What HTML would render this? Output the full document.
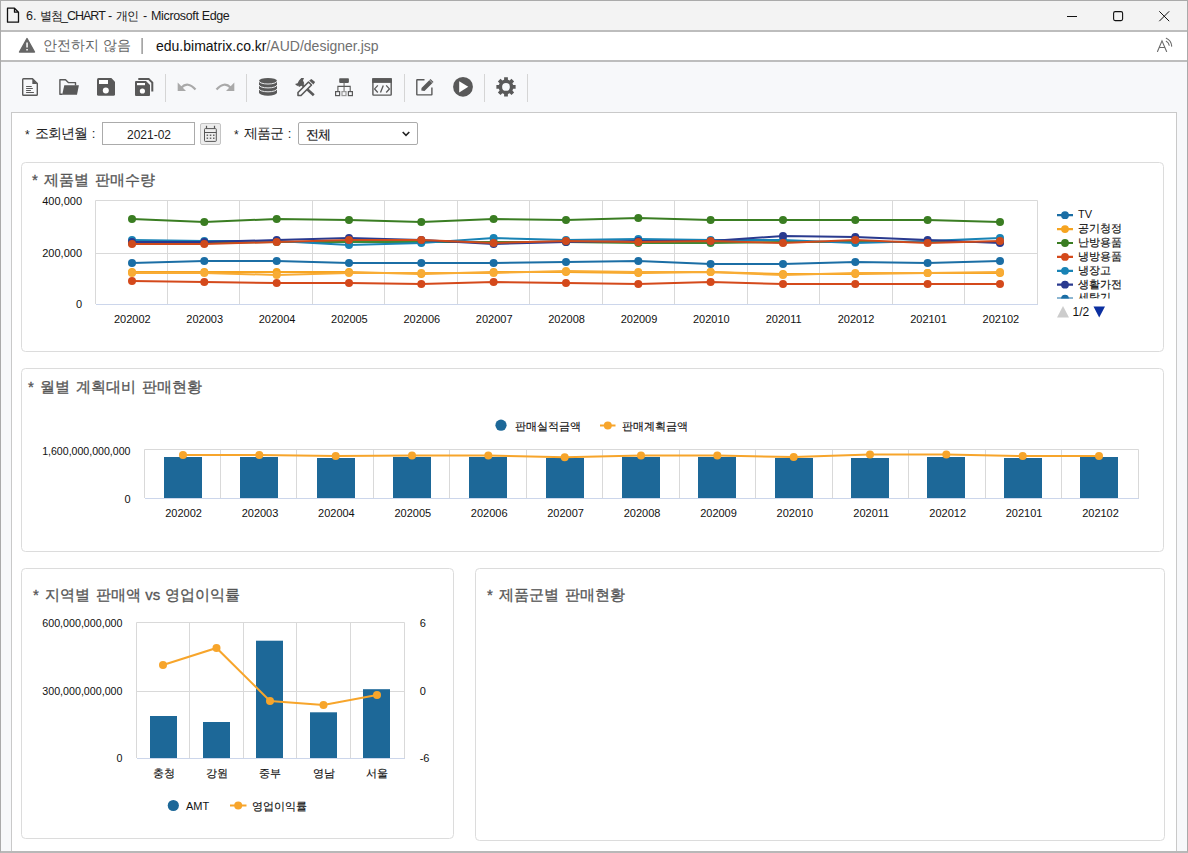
<!DOCTYPE html>
<html><head><meta charset="utf-8">
<style>
*{margin:0;padding:0;box-sizing:border-box}
html,body{width:1188px;height:853px;overflow:hidden;background:#f7f8fa;font-family:"Liberation Sans",sans-serif;color:#222;position:relative}
.a{position:absolute}
.t{position:absolute;white-space:nowrap;line-height:1}
svg{position:absolute;left:0;top:0;overflow:visible}
#title{position:absolute;left:0;top:0;width:1188px;height:30px;background:#f3f3f3}
#addr{position:absolute;left:0;top:32px;width:1188px;height:28px;background:#fff}
.hl{position:absolute;left:0;width:1188px;height:2px;background:#bdbdbd}
.sep{position:absolute;top:74px;width:1px;height:28px;background:#d4d4d4}
#content{position:absolute;left:11px;top:112px;width:1166px;height:745px;border:1px solid #c9c9c9;background:#fff}
.panel{position:absolute;border:1px solid #dcdcdc;border-radius:4.5px;background:#fff}
.ptitle{position:absolute;font-weight:400;-webkit-text-stroke:0.3px #555;font-size:15px;color:#555;white-space:nowrap;line-height:1;word-spacing:2px}
#frame{position:absolute;left:0;top:0;width:1188px;height:853px;border:1px solid #aaaaaa;border-bottom:2px solid #b8b8b8;pointer-events:none}
</style></head><body>
<div id="title"></div>
<div class="hl" style="top:30px"></div>
<div id="addr"></div>
<div class="hl" style="top:60px"></div>
<svg width="1188" height="62">
 <path d="M7.5 8.2h7l4 4v10h-11z M14.5 8.2v4h4" fill="none" stroke="#111" stroke-width="1.3" stroke-linejoin="round"/>
 <rect x="1067" y="16" width="10" height="1" fill="#111"/>
 <rect x="1113.6" y="11.6" width="9" height="9" rx="1.6" fill="none" stroke="#111" stroke-width="1.1"/>
 <path d="M1159.3 11.3L1169.2 21.2M1169.2 11.3L1159.3 21.2" stroke="#111" stroke-width="1"/>
 <path d="M27 38.5L34.5 52H19.5z" fill="#666" stroke="#666" stroke-width="1.4" stroke-linejoin="round"/>
 <rect x="26.3" y="42.5" width="1.5" height="5" fill="#fff"/><rect x="26.3" y="49" width="1.5" height="1.5" fill="#fff"/>
 <rect x="141.5" y="38" width="1.2" height="16" fill="#808080"/>
</svg>
<div class="t" style="left:26px;top:10px;font-size:12.5px;color:#1a1a1a">6.</div>
<div class="t" style="left:39.5px;top:9.5px;font-size:12px;color:#1a1a1a;letter-spacing:-0.5px">별첨</div>
<div class="t" style="left:61px;top:10px;font-size:12.5px;color:#1a1a1a;letter-spacing:-1px">_CHART</div>
<div class="t" style="left:108px;top:10px;font-size:12.5px;color:#1a1a1a">-</div>
<div class="t" style="left:115.5px;top:9.5px;font-size:12px;color:#1a1a1a;letter-spacing:-0.5px">개인</div>
<div class="t" style="left:143px;top:10px;font-size:12.5px;color:#1a1a1a">-</div>
<div class="t" style="left:151px;top:10px;font-size:12.5px;color:#1a1a1a;letter-spacing:-0.35px">Microsoft Edge</div>
<div class="t" style="left:43px;top:38px;font-size:14px;color:#666">안전하지 않음</div>
<div class="t" style="left:156px;top:39px;font-size:14px;color:#111">edu.bimatrix.co.kr<span style="color:#707070">/AUD/designer.jsp</span></div>
<svg width="1188" height="62"><g fill="none" stroke="#6a6a6a" stroke-width="1.1" stroke-linecap="round">
 <path d="M1157.5 51.5L1162 40.8L1166.6 51.5M1159.3 47.5H1164.6"/>
 <path d="M1166.3 41.3Q1168.8 42.8 1169.2 45.3"/>
 <path d="M1166.3 38.3Q1171.2 40.5 1171.7 46.1"/>
</g></svg>

<svg width="1188" height="120">
  <g fill="#595959" stroke="#595959">
   <path d="M22.7 79.5Q22.7 78.7 23.5 78.7H32.5L37.3 83.5V94.5Q37.3 95.3 36.5 95.3H23.5Q22.7 95.3 22.7 94.5Z" fill="none" stroke-width="1.4" stroke-linejoin="round"/>
   <path d="M32.3 78.7V84H37.3Z" stroke="none"/>
   <rect x="26.1" y="86" width="5.6" height="1" stroke="none"/>
   <rect x="26.1" y="88" width="6.7" height="1" stroke="none"/>
   <rect x="26.1" y="90" width="4.8" height="1" stroke="none"/>
   <rect x="26.1" y="92" width="7.8" height="1" stroke="none"/>
   <path d="M62.5 94.3H59.9V79.8H65.5L68.3 82.6H75.5V85.5" fill="none" stroke-width="1.4" stroke-linejoin="round"/>
   <path d="M64.3 85.3H78.9L77 94.8H62.2Z" stroke="none"/>
   <path d="M97 79.5Q97 78 98.5 78H111.3L115 81.7V94.3Q115 95.8 113.5 95.8H98.5Q97 95.8 97 94.3Z" stroke="none"/>
   <rect x="99" y="80" width="9" height="4" fill="#fff" stroke="none"/>
   <circle cx="105.8" cy="90.4" r="3" fill="#fff" stroke="none"/>
   <path d="M138.3 78.9H148.6L152.3 82.6V91.5" fill="none" stroke-width="2"/>
   <path d="M135 82Q135 81 136 81H146L150 85V95Q150 96 149 96H136Q135 96 135 95Z" stroke="none"/>
   <rect x="137" y="83" width="8" height="2.2" fill="#fff" stroke="none"/>
   <circle cx="142.4" cy="91" r="2.6" fill="#fff" stroke="none"/>
  </g>
  <g fill="#a9a9a9" stroke="#a9a9a9">
   <path d="M177.7 82.6V90.9H186Z" stroke="none"/>
   <path d="M181.5 87.6Q187.5 81 195.5 89.5" fill="none" stroke-width="2.2"/>
   <path d="M234.3 82.6V90.9H226Z" stroke="none"/>
   <path d="M230.5 87.6Q224.5 81 216.5 89.5" fill="none" stroke-width="2.2"/>
  </g>
  <g fill="#595959" stroke="#595959">
   <path d="M259 80.8A9 2.9 0 0 1 277 80.8V92.8A9 2.9 0 0 1 259 92.8Z" stroke="none"/>
   <path d="M259 81.1A9 2.9 0 0 0 277 81.1M259 85A9 2.9 0 0 0 277 85M259 88.9A9 2.9 0 0 0 277 88.9" fill="none" stroke="#f7f8fa" stroke-width="0.9"/>
   <path d="M302 84.5L313.8 95.2" fill="none" stroke-width="2.6"/>
   <path d="M295 84L297.6 83.2L299 80.4L301.3 78L304 78L303 80.4L304.3 83.3L301.9 85.6L299 86.9L298 85.2L297.5 86.3Z" stroke="none"/>
   <path d="M298 95.5V92.5L308.5 82L311.5 85L301 95.5Z" fill="#f7f8fa" stroke-width="1.6" stroke-linejoin="round"/>
   <path d="M309.2 80.6L311.4 79L315.1 82L313.4 84.6Z" stroke="none"/>
   <rect x="339.2" y="78.2" width="9.7" height="4.7" rx="0.8" stroke="none"/>
   <rect x="343.3" y="82.9" width="1.6" height="8" fill="#9a9a9a" stroke="none"/>
   <path d="M337.9 91V86.4H350.2V91" fill="none" stroke-width="1.1"/>
   <rect x="335.6" y="91.6" width="4" height="4" fill="none" stroke-width="1.2"/>
   <rect x="342" y="91.6" width="4" height="4" fill="none" stroke="#9a9a9a" stroke-width="1.2"/>
   <rect x="348.4" y="91.6" width="4" height="4" fill="none" stroke-width="1.2"/>
   <rect x="372.9" y="78.9" width="18.3" height="16.2" rx="0.6" fill="none" stroke-width="1.4"/>
   <rect x="372.2" y="78.2" width="19.6" height="4.7" stroke="none"/>
   <path d="M377.8 85.4L374.6 88.9L377.8 92.5M386.2 85.4L389.4 88.9L386.2 92.5M383.3 85.4L380.5 92.6" fill="none" stroke-width="1.3"/>
   <path d="M424.5 79.8H417.2Q416.8 79.8 416.8 80.2V94.5Q416.8 94.9 417.2 94.9H431.5Q431.9 94.9 431.9 94.5V87.5" fill="none" stroke-width="1.4"/>
   <path d="M421.3 90.5L421.5 88L430.5 79L433.5 82L424.5 91Z" stroke="none"/>
   <path d="M429.5 80L432.5 83" stroke="#f7f8fa" stroke-width="0.6"/>
   <circle cx="463" cy="86.8" r="9.9" stroke="none"/>
   <path d="M459.2 81.2V92.4L468.3 86.8Z" fill="#fff" stroke="none"/>
   <g transform="translate(496,76.9)">
   <path d="M8.08 2.85 L8.13 0.38 L11.87 0.38 L11.92 2.85 L13.70 3.59 L15.48 1.88 L18.12 4.52 L16.41 6.30 L17.15 8.08 L19.62 8.13 L19.62 11.87 L17.15 11.92 L16.41 13.70 L18.12 15.48 L15.48 18.12 L13.70 16.41 L11.92 17.15 L11.87 19.62 L8.13 19.62 L8.08 17.15 L6.30 16.41 L4.52 18.12 L1.88 15.48 L3.59 13.70 L2.85 11.92 L0.38 11.87 L0.38 8.13 L2.85 8.08 L3.59 6.30 L1.88 4.52 L4.52 1.88 L6.30 3.59Z" stroke="none"/>
   <circle cx="10" cy="10" r="3.9" fill="#f7f8fa" stroke="none"/>
   </g>
  </g>
  <g fill="#d5d5d5">
   <rect x="165" y="74" width="1" height="28"/>
   <rect x="246" y="74" width="1" height="28"/>
   <rect x="404" y="74" width="1" height="28"/>
   <rect x="484" y="74" width="1" height="28"/>
   <rect x="527" y="74" width="1" height="28"/>
  </g>
</svg>


<div id="content"></div>

<!-- filter row -->
<div class="t" style="left:25px;top:126px;font-size:13px;color:#222"><span style="position:relative;top:1px;font-size:12px">*</span><span style="font-size:14px;letter-spacing:-1px;margin-left:5.5px">조회년월</span><span style="margin-left:4.5px">:</span></div>
<div class="a" style="left:102px;top:122px;width:93px;height:23px;border:1px solid #ababab;background:#fff"></div>
<div class="t" style="left:127px;top:129px;font-size:12px;color:#222">2021-02</div>
<div class="a" style="left:200px;top:123px;width:21px;height:22px;border:1px solid #c4c4c4;border-radius:2px;background:#ededed"></div>
<svg width="1188" height="200">
 <rect x="204.5" y="128.6" width="11.8" height="12.8" rx="0.8" fill="none" stroke="#555" stroke-width="1"/>
 <rect x="204.5" y="132" width="11.8" height="1" fill="#555"/>
 <rect x="205.9" y="125.8" width="1.2" height="2.6" fill="#555"/><rect x="213.9" y="125.8" width="1.2" height="2.6" fill="#555"/>
 <g fill="#666"><rect x="206.6" y="134.5" width="1.5" height="1.5"/><rect x="209.8" y="134.5" width="1.5" height="1.5"/><rect x="213" y="134.5" width="1.5" height="1.5"/>
 <rect x="206.6" y="137.5" width="1.5" height="1.5"/><rect x="209.8" y="137.5" width="1.5" height="1.5"/><rect x="213" y="137.5" width="1.5" height="1.5"/></g>
</svg>
<div class="t" style="left:234px;top:126px;font-size:13px;color:#222"><span style="position:relative;top:1px;font-size:12px">*</span><span style="font-size:14px;letter-spacing:-1px;margin-left:5.5px">제품군</span><span style="margin-left:4.5px">:</span></div>
<div class="a" style="left:298px;top:122px;width:120px;height:23px;border:1px solid #ababab;border-radius:2px;background:#fff"></div>
<div class="t" style="left:305.5px;top:127.5px;font-size:13px;color:#111;letter-spacing:-0.9px;-webkit-text-stroke:0.15px #111">전체</div>
<svg width="1188" height="200"><path d="M402.7 132L406 135.3L409.3 132" fill="none" stroke="#222" stroke-width="1.6"/></svg>

<!-- panels -->
<div class="panel" style="left:21px;top:162px;width:1143px;height:190px"></div>
<div class="panel" style="left:21px;top:368px;width:1143px;height:184px"></div>
<div class="panel" style="left:21px;top:568px;width:433px;height:271px"></div>
<div class="panel" style="left:475px;top:568px;width:690px;height:273px"></div>

<div class="ptitle" style="left:32px;top:172px">* 제품별 판매수량</div>
<div class="ptitle" style="left:28px;top:379px">* 월별 계획대비 판매현황</div>
<div class="ptitle" style="left:33px;top:587px">* 지역별 판매액<span style="margin-left:-2px"> vs</span><span style="margin-left:-1.5px"> 영업이익률</span></div>
<div class="ptitle" style="left:487px;top:587px">* 제품군별 판매현황</div>

<svg width="1188" height="853" font-family="Liberation Sans, sans-serif"><line x1="167.5" y1="200" x2="167.5" y2="304" stroke="#d9d9d9"/><line x1="239.5" y1="200" x2="239.5" y2="304" stroke="#d9d9d9"/><line x1="312.5" y1="200" x2="312.5" y2="304" stroke="#d9d9d9"/><line x1="384.5" y1="200" x2="384.5" y2="304" stroke="#d9d9d9"/><line x1="457.5" y1="200" x2="457.5" y2="304" stroke="#d9d9d9"/><line x1="529.5" y1="200" x2="529.5" y2="304" stroke="#d9d9d9"/><line x1="602.5" y1="200" x2="602.5" y2="304" stroke="#d9d9d9"/><line x1="674.5" y1="200" x2="674.5" y2="304" stroke="#d9d9d9"/><line x1="747.5" y1="200" x2="747.5" y2="304" stroke="#d9d9d9"/><line x1="819.5" y1="200" x2="819.5" y2="304" stroke="#d9d9d9"/><line x1="892.5" y1="200" x2="892.5" y2="304" stroke="#d9d9d9"/><line x1="964.5" y1="200" x2="964.5" y2="304" stroke="#d9d9d9"/><line x1="95" y1="253.5" x2="1037" y2="253.5" stroke="#d9d9d9"/><path d="M95.5 304V200.5H1037.5V304" fill="none" stroke="#d9d9d9"/><line x1="96" y1="304.5" x2="1038" y2="304.5" stroke="#ccd6eb"/><text x="82" y="205" font-size="11" text-anchor="end" fill="#111">400,000</text><text x="82" y="257" font-size="11" text-anchor="end" fill="#111">200,000</text><text x="82" y="308" font-size="11" text-anchor="end" fill="#111">0</text><text x="132.3" y="323" font-size="11" text-anchor="middle" fill="#111">202002</text><text x="204.7" y="323" font-size="11" text-anchor="middle" fill="#111">202003</text><text x="277.1" y="323" font-size="11" text-anchor="middle" fill="#111">202004</text><text x="349.4" y="323" font-size="11" text-anchor="middle" fill="#111">202005</text><text x="421.8" y="323" font-size="11" text-anchor="middle" fill="#111">202006</text><text x="494.2" y="323" font-size="11" text-anchor="middle" fill="#111">202007</text><text x="566.6" y="323" font-size="11" text-anchor="middle" fill="#111">202008</text><text x="639.0" y="323" font-size="11" text-anchor="middle" fill="#111">202009</text><text x="711.3" y="323" font-size="11" text-anchor="middle" fill="#111">202010</text><text x="783.7" y="323" font-size="11" text-anchor="middle" fill="#111">202011</text><text x="856.1" y="323" font-size="11" text-anchor="middle" fill="#111">202012</text><text x="928.5" y="323" font-size="11" text-anchor="middle" fill="#111">202101</text><text x="1000.9" y="323" font-size="11" text-anchor="middle" fill="#111">202102</text><polyline points="132.0,219 204.3,222 276.7,219 349.0,220 421.3,222 493.6,219 566.0,220 638.3,218 710.6,220 783.0,220 855.3,220 927.6,220 1000.0,222" fill="none" stroke="#3a7d22" stroke-width="2"/><circle cx="132.0" cy="219" r="4" fill="#3a7d22"/><circle cx="204.3" cy="222" r="4" fill="#3a7d22"/><circle cx="276.7" cy="219" r="4" fill="#3a7d22"/><circle cx="349.0" cy="220" r="4" fill="#3a7d22"/><circle cx="421.3" cy="222" r="4" fill="#3a7d22"/><circle cx="493.6" cy="219" r="4" fill="#3a7d22"/><circle cx="566.0" cy="220" r="4" fill="#3a7d22"/><circle cx="638.3" cy="218" r="4" fill="#3a7d22"/><circle cx="710.6" cy="220" r="4" fill="#3a7d22"/><circle cx="783.0" cy="220" r="4" fill="#3a7d22"/><circle cx="855.3" cy="220" r="4" fill="#3a7d22"/><circle cx="927.6" cy="220" r="4" fill="#3a7d22"/><circle cx="1000.0" cy="222" r="4" fill="#3a7d22"/><polyline points="132.0,263 204.3,261 276.7,261 349.0,263 421.3,263 493.6,263 566.0,262 638.3,261 710.6,264 783.0,264 855.3,262 927.6,263 1000.0,261" fill="none" stroke="#1b6ea5" stroke-width="2"/><circle cx="132.0" cy="263" r="4" fill="#1b6ea5"/><circle cx="204.3" cy="261" r="4" fill="#1b6ea5"/><circle cx="276.7" cy="261" r="4" fill="#1b6ea5"/><circle cx="349.0" cy="263" r="4" fill="#1b6ea5"/><circle cx="421.3" cy="263" r="4" fill="#1b6ea5"/><circle cx="493.6" cy="263" r="4" fill="#1b6ea5"/><circle cx="566.0" cy="262" r="4" fill="#1b6ea5"/><circle cx="638.3" cy="261" r="4" fill="#1b6ea5"/><circle cx="710.6" cy="264" r="4" fill="#1b6ea5"/><circle cx="783.0" cy="264" r="4" fill="#1b6ea5"/><circle cx="855.3" cy="262" r="4" fill="#1b6ea5"/><circle cx="927.6" cy="263" r="4" fill="#1b6ea5"/><circle cx="1000.0" cy="261" r="4" fill="#1b6ea5"/><polyline points="132.0,272 204.3,272 276.7,272 349.0,272 421.3,274 493.6,272 566.0,272 638.3,273 710.6,272 783.0,274 855.3,274 927.6,273 1000.0,273" fill="none" stroke="#f6a421" stroke-width="2"/><circle cx="132.0" cy="272" r="4" fill="#f6a421"/><circle cx="204.3" cy="272" r="4" fill="#f6a421"/><circle cx="276.7" cy="272" r="4" fill="#f6a421"/><circle cx="349.0" cy="272" r="4" fill="#f6a421"/><circle cx="421.3" cy="274" r="4" fill="#f6a421"/><circle cx="493.6" cy="272" r="4" fill="#f6a421"/><circle cx="566.0" cy="272" r="4" fill="#f6a421"/><circle cx="638.3" cy="273" r="4" fill="#f6a421"/><circle cx="710.6" cy="272" r="4" fill="#f6a421"/><circle cx="783.0" cy="274" r="4" fill="#f6a421"/><circle cx="855.3" cy="274" r="4" fill="#f6a421"/><circle cx="927.6" cy="273" r="4" fill="#f6a421"/><circle cx="1000.0" cy="273" r="4" fill="#f6a421"/><polyline points="132.0,273 204.3,273 276.7,275 349.0,273 421.3,273 493.6,273 566.0,271 638.3,272 710.6,272 783.0,275 855.3,273 927.6,273 1000.0,272" fill="none" stroke="#f8ac35" stroke-width="2"/><circle cx="132.0" cy="273" r="4" fill="#f8ac35"/><circle cx="204.3" cy="273" r="4" fill="#f8ac35"/><circle cx="276.7" cy="275" r="4" fill="#f8ac35"/><circle cx="349.0" cy="273" r="4" fill="#f8ac35"/><circle cx="421.3" cy="273" r="4" fill="#f8ac35"/><circle cx="493.6" cy="273" r="4" fill="#f8ac35"/><circle cx="566.0" cy="271" r="4" fill="#f8ac35"/><circle cx="638.3" cy="272" r="4" fill="#f8ac35"/><circle cx="710.6" cy="272" r="4" fill="#f8ac35"/><circle cx="783.0" cy="275" r="4" fill="#f8ac35"/><circle cx="855.3" cy="273" r="4" fill="#f8ac35"/><circle cx="927.6" cy="273" r="4" fill="#f8ac35"/><circle cx="1000.0" cy="272" r="4" fill="#f8ac35"/><polyline points="132.0,281 204.3,282 276.7,283 349.0,283 421.3,284 493.6,282 566.0,283 638.3,284 710.6,282 783.0,284 855.3,284 927.6,284 1000.0,284" fill="none" stroke="#d4491b" stroke-width="2"/><circle cx="132.0" cy="281" r="4" fill="#d4491b"/><circle cx="204.3" cy="282" r="4" fill="#d4491b"/><circle cx="276.7" cy="283" r="4" fill="#d4491b"/><circle cx="349.0" cy="283" r="4" fill="#d4491b"/><circle cx="421.3" cy="284" r="4" fill="#d4491b"/><circle cx="493.6" cy="282" r="4" fill="#d4491b"/><circle cx="566.0" cy="283" r="4" fill="#d4491b"/><circle cx="638.3" cy="284" r="4" fill="#d4491b"/><circle cx="710.6" cy="282" r="4" fill="#d4491b"/><circle cx="783.0" cy="284" r="4" fill="#d4491b"/><circle cx="855.3" cy="284" r="4" fill="#d4491b"/><circle cx="927.6" cy="284" r="4" fill="#d4491b"/><circle cx="1000.0" cy="284" r="4" fill="#d4491b"/><polyline points="132.0,243 204.3,243 276.7,242 349.0,242 421.3,242 493.6,242 566.0,242 638.3,243 710.6,243 783.0,242 855.3,242 927.6,242 1000.0,242" fill="none" stroke="#3d8a36" stroke-width="2"/><circle cx="132.0" cy="243" r="4" fill="#3d8a36"/><circle cx="204.3" cy="243" r="4" fill="#3d8a36"/><circle cx="276.7" cy="242" r="4" fill="#3d8a36"/><circle cx="349.0" cy="242" r="4" fill="#3d8a36"/><circle cx="421.3" cy="242" r="4" fill="#3d8a36"/><circle cx="493.6" cy="242" r="4" fill="#3d8a36"/><circle cx="566.0" cy="242" r="4" fill="#3d8a36"/><circle cx="638.3" cy="243" r="4" fill="#3d8a36"/><circle cx="710.6" cy="243" r="4" fill="#3d8a36"/><circle cx="783.0" cy="242" r="4" fill="#3d8a36"/><circle cx="855.3" cy="242" r="4" fill="#3d8a36"/><circle cx="927.6" cy="242" r="4" fill="#3d8a36"/><circle cx="1000.0" cy="242" r="4" fill="#3d8a36"/><polyline points="132.0,240 204.3,241 276.7,241 349.0,245 421.3,243 493.6,238 566.0,240 638.3,239 710.6,240 783.0,240 855.3,243 927.6,241 1000.0,238" fill="none" stroke="#1983b5" stroke-width="2"/><circle cx="132.0" cy="240" r="4" fill="#1983b5"/><circle cx="204.3" cy="241" r="4" fill="#1983b5"/><circle cx="276.7" cy="241" r="4" fill="#1983b5"/><circle cx="349.0" cy="245" r="4" fill="#1983b5"/><circle cx="421.3" cy="243" r="4" fill="#1983b5"/><circle cx="493.6" cy="238" r="4" fill="#1983b5"/><circle cx="566.0" cy="240" r="4" fill="#1983b5"/><circle cx="638.3" cy="239" r="4" fill="#1983b5"/><circle cx="710.6" cy="240" r="4" fill="#1983b5"/><circle cx="783.0" cy="240" r="4" fill="#1983b5"/><circle cx="855.3" cy="243" r="4" fill="#1983b5"/><circle cx="927.6" cy="241" r="4" fill="#1983b5"/><circle cx="1000.0" cy="238" r="4" fill="#1983b5"/><polyline points="132.0,242 204.3,242 276.7,240 349.0,238 421.3,240 493.6,244 566.0,242 638.3,241 710.6,241 783.0,236 855.3,237 927.6,240 1000.0,243" fill="none" stroke="#2a3a8f" stroke-width="2"/><circle cx="132.0" cy="242" r="4" fill="#2a3a8f"/><circle cx="204.3" cy="242" r="4" fill="#2a3a8f"/><circle cx="276.7" cy="240" r="4" fill="#2a3a8f"/><circle cx="349.0" cy="238" r="4" fill="#2a3a8f"/><circle cx="421.3" cy="240" r="4" fill="#2a3a8f"/><circle cx="493.6" cy="244" r="4" fill="#2a3a8f"/><circle cx="566.0" cy="242" r="4" fill="#2a3a8f"/><circle cx="638.3" cy="241" r="4" fill="#2a3a8f"/><circle cx="710.6" cy="241" r="4" fill="#2a3a8f"/><circle cx="783.0" cy="236" r="4" fill="#2a3a8f"/><circle cx="855.3" cy="237" r="4" fill="#2a3a8f"/><circle cx="927.6" cy="240" r="4" fill="#2a3a8f"/><circle cx="1000.0" cy="243" r="4" fill="#2a3a8f"/><polyline points="132.0,244 204.3,244 276.7,242 349.0,240 421.3,240 493.6,243 566.0,241 638.3,242 710.6,241 783.0,243 855.3,240 927.6,243 1000.0,241" fill="none" stroke="#cf4a1c" stroke-width="2"/><circle cx="132.0" cy="244" r="4" fill="#cf4a1c"/><circle cx="204.3" cy="244" r="4" fill="#cf4a1c"/><circle cx="276.7" cy="242" r="4" fill="#cf4a1c"/><circle cx="349.0" cy="240" r="4" fill="#cf4a1c"/><circle cx="421.3" cy="240" r="4" fill="#cf4a1c"/><circle cx="493.6" cy="243" r="4" fill="#cf4a1c"/><circle cx="566.0" cy="241" r="4" fill="#cf4a1c"/><circle cx="638.3" cy="242" r="4" fill="#cf4a1c"/><circle cx="710.6" cy="241" r="4" fill="#cf4a1c"/><circle cx="783.0" cy="243" r="4" fill="#cf4a1c"/><circle cx="855.3" cy="240" r="4" fill="#cf4a1c"/><circle cx="927.6" cy="243" r="4" fill="#cf4a1c"/><circle cx="1000.0" cy="241" r="4" fill="#cf4a1c"/><defs><clipPath id="lg"><rect x="1050" y="205" width="120" height="93.5"/></clipPath></defs><g clip-path="url(#lg)"><line x1="1057" y1="215.2" x2="1073" y2="215.2" stroke="#1b6ea5" stroke-width="2.2"/><circle cx="1065" cy="215.2" r="3.9" fill="#1b6ea5"/><text x="1078" y="218.0" font-size="11" text-anchor="start" fill="#111">TV</text><line x1="1057" y1="229.1" x2="1073" y2="229.1" stroke="#f6a421" stroke-width="2.2"/><circle cx="1065" cy="229.1" r="3.9" fill="#f6a421"/><text x="1078" y="231.9" font-size="11" text-anchor="start" fill="#111" stroke="#111" stroke-width="0.15">공기청정</text><line x1="1057" y1="243.0" x2="1073" y2="243.0" stroke="#3a7d22" stroke-width="2.2"/><circle cx="1065" cy="243.0" r="3.9" fill="#3a7d22"/><text x="1078" y="245.8" font-size="11" text-anchor="start" fill="#111" stroke="#111" stroke-width="0.15">난방용품</text><line x1="1057" y1="256.9" x2="1073" y2="256.9" stroke="#d4491b" stroke-width="2.2"/><circle cx="1065" cy="256.9" r="3.9" fill="#d4491b"/><text x="1078" y="259.7" font-size="11" text-anchor="start" fill="#111" stroke="#111" stroke-width="0.15">냉방용품</text><line x1="1057" y1="270.8" x2="1073" y2="270.8" stroke="#1983b5" stroke-width="2.2"/><circle cx="1065" cy="270.8" r="3.9" fill="#1983b5"/><text x="1078" y="273.6" font-size="11" text-anchor="start" fill="#111" stroke="#111" stroke-width="0.15">냉장고</text><line x1="1057" y1="284.7" x2="1073" y2="284.7" stroke="#2a3a8f" stroke-width="2.2"/><circle cx="1065" cy="284.7" r="3.9" fill="#2a3a8f"/><text x="1078" y="287.5" font-size="11" text-anchor="start" fill="#111" stroke="#111" stroke-width="0.15">생활가전</text><line x1="1057" y1="298.6" x2="1073" y2="298.6" stroke="#1b6ea5" stroke-width="2.2"/><circle cx="1065" cy="298.6" r="3.9" fill="#1b6ea5"/><text x="1078" y="301.40000000000003" font-size="11" text-anchor="start" fill="#111" stroke="#111" stroke-width="0.15">세탁기</text></g><path d="M1057 317.5L1063 306L1069 317.5Z" fill="#cccccc"/><text x="1072.5" y="316" font-size="12" text-anchor="start" fill="#111">1/2</text><path d="M1093.5 306.5L1105 306.5L1099.2 317.5Z" fill="#0b2fa0"/></svg>
<svg width="1188" height="853" font-family="Liberation Sans, sans-serif"><line x1="220.5" y1="449" x2="220.5" y2="498" stroke="#d9d9d9"/><line x1="296.5" y1="449" x2="296.5" y2="498" stroke="#d9d9d9"/><line x1="373.5" y1="449" x2="373.5" y2="498" stroke="#d9d9d9"/><line x1="449.5" y1="449" x2="449.5" y2="498" stroke="#d9d9d9"/><line x1="526.5" y1="449" x2="526.5" y2="498" stroke="#d9d9d9"/><line x1="602.5" y1="449" x2="602.5" y2="498" stroke="#d9d9d9"/><line x1="679.5" y1="449" x2="679.5" y2="498" stroke="#d9d9d9"/><line x1="755.5" y1="449" x2="755.5" y2="498" stroke="#d9d9d9"/><line x1="832.5" y1="449" x2="832.5" y2="498" stroke="#d9d9d9"/><line x1="908.5" y1="449" x2="908.5" y2="498" stroke="#d9d9d9"/><line x1="985.5" y1="449" x2="985.5" y2="498" stroke="#d9d9d9"/><line x1="1061.5" y1="449" x2="1061.5" y2="498" stroke="#d9d9d9"/><path d="M144.5 498V449.5H1138.5V498" fill="none" stroke="#d9d9d9"/><rect x="164" y="457" width="38" height="41" fill="#1d6898"/><rect x="240" y="457" width="38" height="41" fill="#1d6898"/><rect x="317" y="458" width="38" height="40" fill="#1d6898"/><rect x="393" y="457" width="38" height="41" fill="#1d6898"/><rect x="469" y="457" width="38" height="41" fill="#1d6898"/><rect x="546" y="458" width="38" height="40" fill="#1d6898"/><rect x="622" y="457" width="38" height="41" fill="#1d6898"/><rect x="698" y="457" width="38" height="41" fill="#1d6898"/><rect x="775" y="458" width="38" height="40" fill="#1d6898"/><rect x="851" y="458" width="38" height="40" fill="#1d6898"/><rect x="927" y="457" width="38" height="41" fill="#1d6898"/><rect x="1004" y="458" width="38" height="40" fill="#1d6898"/><rect x="1080" y="457" width="38" height="41" fill="#1d6898"/><line x1="145" y1="498.5" x2="1139" y2="498.5" stroke="#ccd6eb"/><polyline points="183.0,455 259.3,455 335.7,456 412.0,455.6 488.3,455.6 564.7,457.2 641.0,455.6 717.3,455.6 793.7,457 870.0,454.6 946.3,454.6 1022.7,456 1099.0,456" fill="none" stroke="#f7a52b" stroke-width="2"/><circle cx="183.0" cy="455" r="4" fill="#f7a52b"/><circle cx="259.3" cy="455" r="4" fill="#f7a52b"/><circle cx="335.7" cy="456" r="4" fill="#f7a52b"/><circle cx="412.0" cy="455.6" r="4" fill="#f7a52b"/><circle cx="488.3" cy="455.6" r="4" fill="#f7a52b"/><circle cx="564.7" cy="457.2" r="4" fill="#f7a52b"/><circle cx="641.0" cy="455.6" r="4" fill="#f7a52b"/><circle cx="717.3" cy="455.6" r="4" fill="#f7a52b"/><circle cx="793.7" cy="457" r="4" fill="#f7a52b"/><circle cx="870.0" cy="454.6" r="4" fill="#f7a52b"/><circle cx="946.3" cy="454.6" r="4" fill="#f7a52b"/><circle cx="1022.7" cy="456" r="4" fill="#f7a52b"/><circle cx="1099.0" cy="456" r="4" fill="#f7a52b"/><text x="130.5" y="454.5" font-size="10.6" text-anchor="end" fill="#111">1,600,000,000,000</text><text x="130.5" y="502.5" font-size="11" text-anchor="end" fill="#111">0</text><text x="183.6" y="516.5" font-size="11" text-anchor="middle" fill="#111">202002</text><text x="260.0" y="516.5" font-size="11" text-anchor="middle" fill="#111">202003</text><text x="336.4" y="516.5" font-size="11" text-anchor="middle" fill="#111">202004</text><text x="412.8" y="516.5" font-size="11" text-anchor="middle" fill="#111">202005</text><text x="489.2" y="516.5" font-size="11" text-anchor="middle" fill="#111">202006</text><text x="565.6" y="516.5" font-size="11" text-anchor="middle" fill="#111">202007</text><text x="642.1" y="516.5" font-size="11" text-anchor="middle" fill="#111">202008</text><text x="718.5" y="516.5" font-size="11" text-anchor="middle" fill="#111">202009</text><text x="794.9" y="516.5" font-size="11" text-anchor="middle" fill="#111">202010</text><text x="871.3" y="516.5" font-size="11" text-anchor="middle" fill="#111">202011</text><text x="947.7" y="516.5" font-size="11" text-anchor="middle" fill="#111">202012</text><text x="1024.1" y="516.5" font-size="11" text-anchor="middle" fill="#111">202101</text><text x="1100.5" y="516.5" font-size="11" text-anchor="middle" fill="#111">202102</text><circle cx="501" cy="425.2" r="5.6" fill="#1d6898"/><text x="514.5" y="429.5" font-size="11" text-anchor="start" fill="#111" stroke="#111" stroke-width="0.15">판매실적금액</text><line x1="600" y1="425.5" x2="615.5" y2="425.5" stroke="#f7a52b" stroke-width="2"/><circle cx="607.8" cy="425.5" r="4" fill="#f7a52b"/><text x="621.5" y="429.5" font-size="11" text-anchor="start" fill="#111" stroke="#111" stroke-width="0.15">판매계획금액</text></svg>
<svg width="1188" height="853" font-family="Liberation Sans, sans-serif"><line x1="189.5" y1="622" x2="189.5" y2="758" stroke="#d9d9d9"/><line x1="243.5" y1="622" x2="243.5" y2="758" stroke="#d9d9d9"/><line x1="296.5" y1="622" x2="296.5" y2="758" stroke="#d9d9d9"/><line x1="350.5" y1="622" x2="350.5" y2="758" stroke="#d9d9d9"/><line x1="136" y1="691.5" x2="404" y2="691.5" stroke="#d9d9d9"/><path d="M136.5 758V622.5H404.5V758" fill="none" stroke="#d9d9d9"/><rect x="150" y="716" width="27" height="42" fill="#1d6898"/><rect x="203" y="722" width="27" height="36" fill="#1d6898"/><rect x="256" y="640.7" width="27" height="117.29999999999995" fill="#1d6898"/><rect x="310" y="712.3" width="27" height="45.700000000000045" fill="#1d6898"/><rect x="363" y="689.2" width="27" height="68.79999999999995" fill="#1d6898"/><line x1="137" y1="758.5" x2="405" y2="758.5" stroke="#ccd6eb"/><polyline points="163.0,665 216.5,648 270.0,701 323.5,705 377.0,695" fill="none" stroke="#f7a52b" stroke-width="2"/><circle cx="163.0" cy="665" r="4" fill="#f7a52b"/><circle cx="216.5" cy="648" r="4" fill="#f7a52b"/><circle cx="270.0" cy="701" r="4" fill="#f7a52b"/><circle cx="323.5" cy="705" r="4" fill="#f7a52b"/><circle cx="377.0" cy="695" r="4" fill="#f7a52b"/><text x="122.5" y="627" font-size="10.7" text-anchor="end" fill="#111">600,000,000,000</text><text x="122.5" y="694.5" font-size="10.7" text-anchor="end" fill="#111">300,000,000,000</text><text x="122.5" y="762" font-size="10.7" text-anchor="end" fill="#111">0</text><text x="419.7" y="627" font-size="11" text-anchor="start" fill="#111">6</text><text x="419.7" y="694.5" font-size="11" text-anchor="start" fill="#111">0</text><text x="419.7" y="762" font-size="11" text-anchor="start" fill="#111">-6</text><text x="163.9" y="776.5" font-size="11" text-anchor="middle" fill="#111" stroke="#111" stroke-width="0.15">충청</text><text x="217.1" y="776.5" font-size="11" text-anchor="middle" fill="#111" stroke="#111" stroke-width="0.15">강원</text><text x="270.3" y="776.5" font-size="11" text-anchor="middle" fill="#111" stroke="#111" stroke-width="0.15">중부</text><text x="323.5" y="776.5" font-size="11" text-anchor="middle" fill="#111" stroke="#111" stroke-width="0.15">영남</text><text x="376.7" y="776.5" font-size="11" text-anchor="middle" fill="#111" stroke="#111" stroke-width="0.15">서울</text><circle cx="173.3" cy="805.5" r="5.6" fill="#1d6898"/><text x="186" y="809.5" font-size="11" text-anchor="start" fill="#111">AMT</text><line x1="230" y1="805.5" x2="246.5" y2="805.5" stroke="#f7a52b" stroke-width="2"/><circle cx="238.2" cy="805.5" r="4" fill="#f7a52b"/><text x="251.7" y="809.5" font-size="11" text-anchor="start" fill="#111" stroke="#111" stroke-width="0.15">영업이익률</text></svg>
<div id="frame"></div>
</body></html>
